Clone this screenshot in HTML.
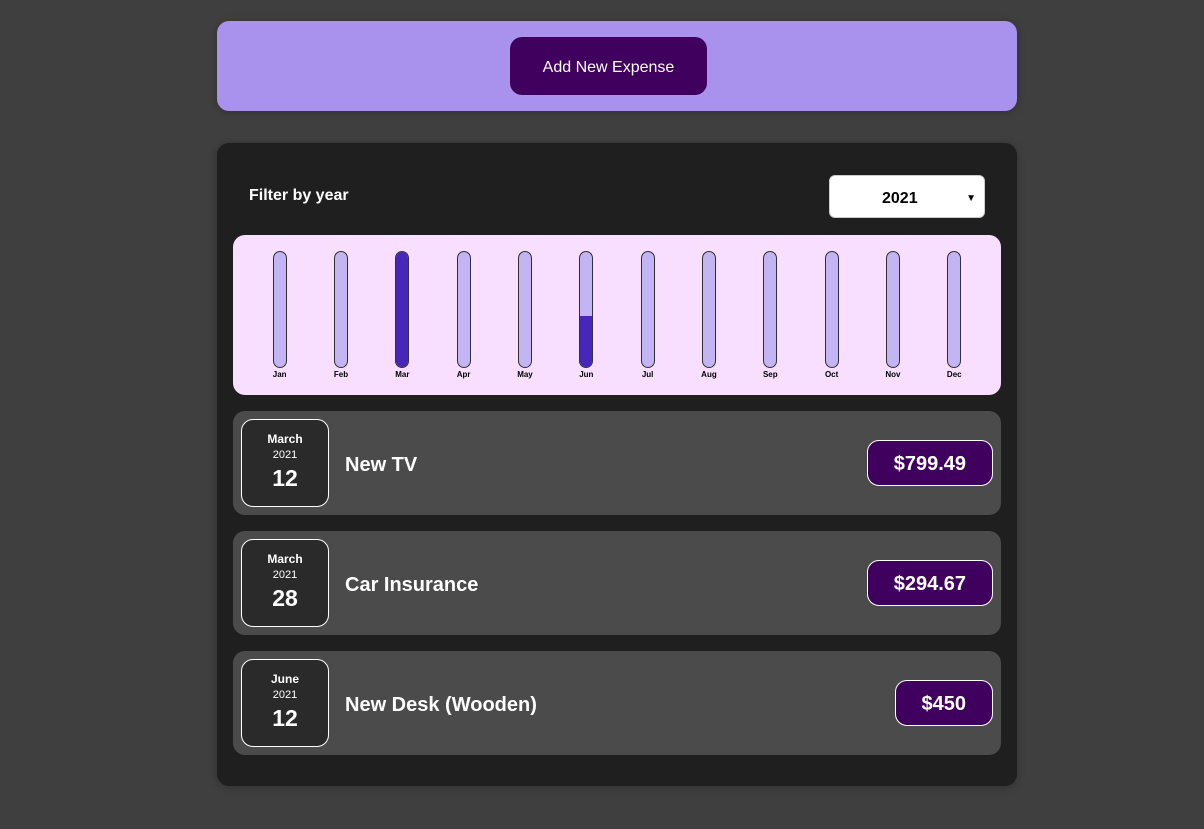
<!DOCTYPE html>
<html><head><style>
*{box-sizing:border-box;margin:0;padding:0}
body{width:1204px;height:829px;background:#3f3f3f;font-family:"Liberation Sans",sans-serif;position:relative;overflow:hidden}
.top{position:absolute;left:217px;top:21px;width:800px;height:90px;background:#a892ee;border-radius:12px;box-shadow:0 1px 8px rgba(0,0,0,.25)}
.top .btn{position:absolute;left:293px;top:16px;width:197px;height:58px;background:#40005d;border-radius:12px;color:#fff;font-size:16px;text-align:center;line-height:62px}
.card{position:absolute;left:217px;top:143px;width:800px;height:643px;background:#1f1f1f;border-radius:12px;box-shadow:0 1px 8px rgba(0,0,0,.25)}
.flabel{position:absolute;left:32px;top:44px;color:#fff;font-weight:bold;font-size:16px}
.sel{position:absolute;left:612px;top:32px;width:156px;height:43px;background:#fff;border:1px solid #ccc;border-radius:6px;font-weight:bold;font-size:16px;line-height:46px;padding-left:52px;color:#000}
.sel span{position:absolute;right:8px;top:0;font-size:10px}
.chart{position:absolute;left:16px;top:92px;width:768px;height:160px;background:#f8dfff;border-radius:12px;padding:16px;display:flex}
.col{flex:1;display:flex;flex-direction:column;align-items:center}
.bar{width:14px;height:117px;border:1px solid #313131;border-radius:12px;background:#c3b4f3;position:relative;overflow:hidden}
.fill{position:absolute;left:0;right:0;bottom:0;background:#4826b9}
.lab{font-size:8px;font-weight:bold;margin-top:2px;color:#000}
.item{position:absolute;left:16px;width:768px;height:104px;background:#4b4b4b;border-radius:12px}
.date{position:absolute;left:8px;top:8px;width:88px;height:88px;background:#2a2a2a;border:1px solid #fff;border-radius:12px;color:#fff;text-align:center;font-weight:bold}
.m{font-size:12px;margin-top:12px}.y{font-size:11px;font-weight:normal;margin-top:3px}.d{font-size:23px;margin-top:4px}
.title{position:absolute;left:112px;top:43px;color:#fff;font-weight:bold;font-size:20px}
.price{position:absolute;right:8px;top:29px;height:46px;background:#40005d;border:1px solid #fff;border-radius:12px;color:#fff;font-weight:bold;font-size:20px;line-height:46px;padding:0 26px}
</style></head><body>
<div class="top"><div class="btn">Add New Expense</div></div>
<div class="card">
<div class="flabel">Filter by year</div>
<div class="sel">2021<span>▼</span></div>
<div class="chart">
<div class="col"><div class="bar"></div><div class="lab">Jan</div></div>
<div class="col"><div class="bar"></div><div class="lab">Feb</div></div>
<div class="col"><div class="bar"><div class="fill" style="height:100%"></div></div><div class="lab">Mar</div></div>
<div class="col"><div class="bar"></div><div class="lab">Apr</div></div>
<div class="col"><div class="bar"></div><div class="lab">May</div></div>
<div class="col"><div class="bar"><div class="fill" style="height:44%"></div></div><div class="lab">Jun</div></div>
<div class="col"><div class="bar"></div><div class="lab">Jul</div></div>
<div class="col"><div class="bar"></div><div class="lab">Aug</div></div>
<div class="col"><div class="bar"></div><div class="lab">Sep</div></div>
<div class="col"><div class="bar"></div><div class="lab">Oct</div></div>
<div class="col"><div class="bar"></div><div class="lab">Nov</div></div>
<div class="col"><div class="bar"></div><div class="lab">Dec</div></div>
</div>
<div class="item" style="top:268px"><div class="date"><div class="m">March</div><div class="y">2021</div><div class="d">12</div></div><div class="title">New TV</div><div class="price">$799.49</div></div>
<div class="item" style="top:388px"><div class="date"><div class="m">March</div><div class="y">2021</div><div class="d">28</div></div><div class="title">Car Insurance</div><div class="price">$294.67</div></div>
<div class="item" style="top:508px"><div class="date"><div class="m">June</div><div class="y">2021</div><div class="d">12</div></div><div class="title">New Desk (Wooden)</div><div class="price">$450</div></div>
</div>
</body></html>
